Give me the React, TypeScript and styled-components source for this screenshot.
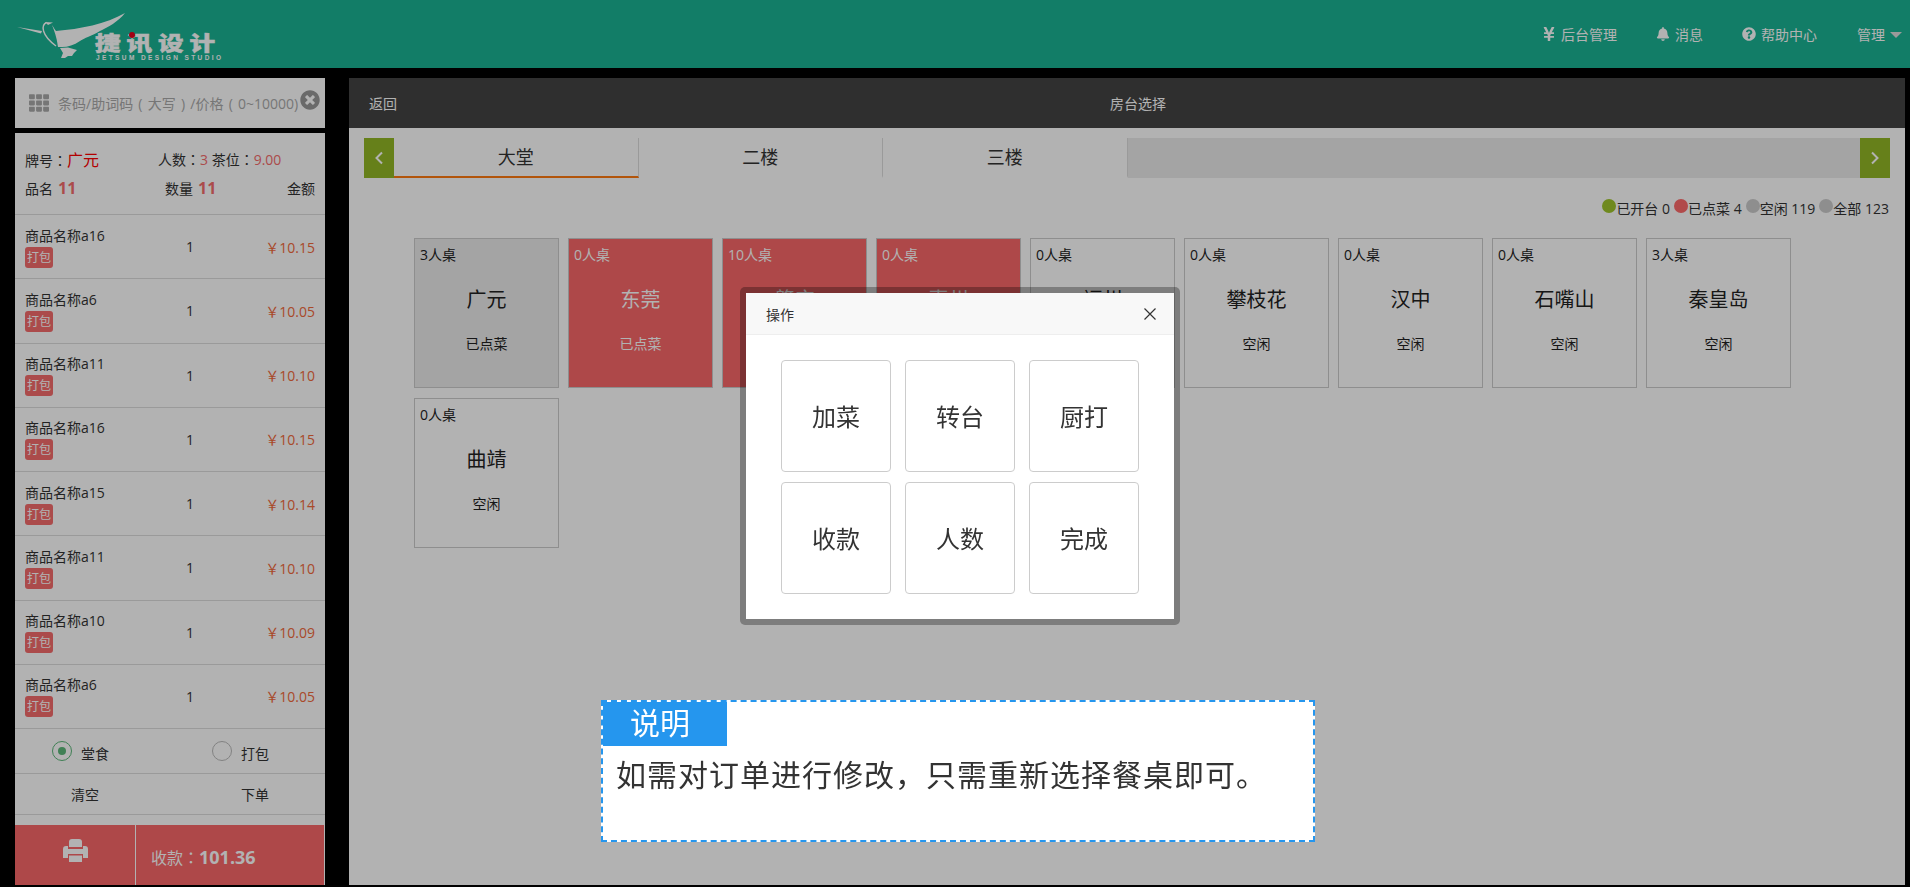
import React from "react";
import styled, { createGlobalStyle } from "styled-components";
import { FaBell, FaQuestionCircle, FaTh, FaTimesCircle, FaYenSign } from "react-icons/fa";

const Global = createGlobalStyle`
  html, body { margin: 0; padding: 0; background: #000; height: 100%; overflow: hidden; }
  body { font-family: "Open Sans", "Noto Sans CJK SC", sans-serif; font-size: 14px; color: #333; }
  * { box-sizing: border-box; }
`;

const Page = styled.div`
  width: 1910px; height: 887px; display: flex; flex-direction: column; background: #000;
`;
const Header = styled.header`
  height: 68px; background: #1ab394; display: flex; align-items: center; justify-content: space-between; flex: none;
`;
const Logo = styled.div`
  position: relative; width: 240px; height: 68px; flex: none;
`;
const LogoBird = styled.svg`
  position: absolute; left: 0; top: 0;
`;
const LogoName = styled.span`
  position: absolute; left: 95px; top: 31px; font-size: 20px; line-height: 23px; font-weight: 900; letter-spacing: 4.6px; color: #fff; white-space: nowrap;
  font-family: "Noto Sans CJK SC", sans-serif; transform: scaleX(1.28); transform-origin: left center; -webkit-text-stroke: .5px #fff;
`;
const LogoSub = styled.span`
  position: absolute; left: 96px; top: 54px; font-size: 6.5px; line-height: 7px; font-weight: 700; letter-spacing: 2.4px; color: #fff; white-space: nowrap;
  font-family: "Liberation Sans", sans-serif;
`;
const Nav = styled.nav`
  display: flex; align-items: center; color: #fff; font-size: 14px; padding-right: 8px;
`;
const NavItem = styled.a<{ $gap: number }>`
  display: flex; align-items: center; gap: 5px; margin-left: ${p => p.$gap}px; white-space: nowrap; color: #fff;
  svg { font-size: 14px; }
`;
const YenIcon = styled.span`
  display: flex; margin-right: -1px; svg { font-size: 16px; }
`;
const Caret = styled.span`
  display: block; width: 0; height: 0; border-left: 6px solid transparent; border-right: 6px solid transparent; border-top: 6px solid #ddd; margin-top: 1px;
`;
const Main = styled.main`
  flex: 1; display: flex; gap: 24px; padding: 10px 5px 2px 15px; min-height: 0;
`;
const LeftCol = styled.aside`
  width: 310px; display: flex; flex-direction: column; gap: 5px; flex: none;
`;
const SearchBox = styled.div`
  height: 50px; background: #fff; display: flex; align-items: center; padding-left: 14px; flex: none; position: relative;
`;
const GridIcon = styled.span`
  display: flex; color: #aaa; font-size: 20px; margin-right: 9px;
`;
const Placeholder = styled.span`
  color: #aaa; font-size: 14px; white-space: nowrap; word-spacing: 1.6px;
`;
const ClearIcon = styled.span`
  position: absolute; left: 285px; top: 12px; display: flex; color: #999; font-size: 20px;
`;
const OrderPanel = styled.section`
  flex: 1; background: #fff; display: flex; flex-direction: column; min-height: 0;
`;
const Summary = styled.div`
  height: 82px; border-bottom: 1px solid #ddd; padding: 16px 10px 0; flex: none;
`;
const SummaryRow = styled.div`
  display: flex; align-items: center; height: 20px; margin-bottom: 9px; position: relative; white-space: nowrap;
`;
const Col = styled.span<{ $w?: number; $right?: boolean }>`
  ${p => (p.$w ? `width: ${p.$w}px;` : "flex: 1;")}
  ${p => (p.$right ? "text-align: right;" : "")}
`;
const Colon = styled.span`
  font-family: "Noto Sans CJK TC", sans-serif;
`;
const Board = styled.span`
  color: #f00; font-size: 16px;
`;
const Num = styled.span`
  color: #f56c6c;
`;
const Count = styled.b`
  color: #f56c6c; font-size: 16px; font-weight: 700; margin-left: 5px;
`;
const ItemRow = styled.div`
  height: 64.25px; border-bottom: 1px solid #ddd; display: flex; align-items: center; padding: 0 10px; flex: none;
`;
const ItemName = styled.div`
  width: 143px; display: flex; flex-direction: column; align-items: flex-start; gap: 1px; line-height: 20px;
`;
const Badge = styled.span`
  width: 28px; height: 21px; line-height: 21px; background: #f56c6c; color: #fff; border-radius: 3px; font-size: 12px; text-align: center; display: block;
`;
const Qty = styled.div`
  width: 44px; text-align: center; font-size: 14px;
`;
const Price = styled.div`
  flex: 1; text-align: right; color: #f26a3c; font-size: 14px; white-space: nowrap;
`;
const RadioRow = styled.div`
  height: 45px; border-bottom: 1px solid #ddd; display: grid; grid-template-columns: 160px 1fr; padding-left: 37px; align-items: center; flex: none;
`;
const RadioItem = styled.label`
  display: flex; align-items: center; gap: 9px;
  span:last-child { margin-top: 3px; }
`;
const RadioCircle = styled.span<{ $on?: boolean }>`
  width: 20px; height: 20px; border-radius: 50%; border: 1px solid ${p => (p.$on ? "#5cb87a" : "#bbb")}; display: flex; align-items: center; justify-content: center; flex: none;
  &::after { content: ""; width: 8px; height: 8px; border-radius: 50%; background: ${p => (p.$on ? "#5cb87a" : "transparent")}; }
`;
const ActionRow = styled.div`
  height: 41px; border-bottom: 1px solid #ddd; display: grid; grid-template-columns: 140px 200px; flex: none;
  align-items: center; justify-items: center;
`;
const PayBar = styled.div`
  margin-top: auto; height: 60px; width: 309px; background: #fa6769; color: #fff; display: flex; flex: none;
`;
const PrintBtn = styled.div`
  width: 121px; border-right: 1px solid #fff; display: flex; align-items: flex-start; justify-content: center; padding-top: 13px;
`;
const PayText = styled.div`
  display: flex; align-items: center; padding-left: 15px; font-size: 16px; padding-top: 3px; white-space: pre;
  b { font-size: 18px; }
`;
const RightPanel = styled.section`
  flex: 1; background: #fff; display: flex; flex-direction: column; min-width: 0;
`;
const RoomBar = styled.div`
  height: 50px; background: #444; color: #fff; display: grid; grid-template-columns: 1fr auto 1fr; align-items: center; padding: 0 20px; flex: none; font-size: 14px;
`;
const RoomTitle = styled.span`
  transform: translateX(11px);
`;
const Tabs = styled.div`
  display: flex; height: 40px; margin: 10px 15px 0; flex: none;
`;
const Arrow = styled.div`
  width: 30px; background: #93b826; display: flex; align-items: center; justify-content: center; flex: none;
`;
const Tab = styled.div<{ $active?: boolean }>`
  width: 244.5px; text-align: center; font-size: 18px; line-height: 38px; color: #333; position: relative; flex: none;
  border-right: 1px solid #ddd;
  border-bottom: 2px solid ${p => (p.$active ? "#ff7a10" : "transparent")};
`;
const TabFill = styled.div`
  flex: 1; background: #ebebeb;
`;
const Legend = styled.div`
  display: flex; justify-content: flex-end; align-items: center; margin: 20px 16px 0 0; height: 20px; font-size: 14px; white-space: nowrap; flex: none;
`;
const LegendItem = styled.span`
  display: flex; align-items: center; margin-left: 4px;
`;
const Dot = styled.i<{ $c: string }>`
  width: 14px; height: 14px; border-radius: 50%; background: ${p => p.$c}; display: block; margin-top: -5px;
`;
const Cards = styled.div`
  display: flex; flex-wrap: wrap; gap: 10px 9px; padding: 20px 90px 0 65px;
`;
const Card = styled.div<{ $kind: "sel" | "red" | "free" }>`
  width: 145px; height: 150px; display: flex; flex-direction: column; align-items: center;
  border: 1px solid #ccc;
  background: ${p => (p.$kind === "sel" ? "#ebebeb" : p.$kind === "red" ? "#fa6769" : "#fff")};
  color: ${p => (p.$kind === "red" ? "#fff" : "#222")};
`;
const Seats = styled.div`
  align-self: flex-start; font-size: 14px; line-height: 20px; margin: 6px 0 0 5px;
`;
const CardName = styled.div`
  font-size: 20px; line-height: 28px; margin-top: 21px;
`;
const CardState = styled.div`
  font-size: 14px; line-height: 20px; margin-top: 20px;
`;
const Overlay = styled.div`
  position: fixed; inset: 0; background: rgba(0,0,0,.3);
`;
const Dialog = styled.div`
  position: fixed; left: 740px; top: 287px; width: 440px; height: 338px; background: #fff; background-clip: padding-box;
  border: 6px solid rgba(0,0,0,.3); border-radius: 5px;
`;
const DialogHead = styled.div`
  height: 42px; background: #f8f8f8; border-bottom: 1px solid #eee; display: flex; align-items: center; justify-content: space-between; padding: 0 18px 0 20px; font-size: 14px; color: #333;
`;
const CloseX = styled.svg`
  display: block;
`;
const DialogGrid = styled.div`
  display: grid; grid-template-columns: repeat(3, 110px); grid-auto-rows: 112px; gap: 10px 14px; padding: 25px 35px;
`;
const Op = styled.button`
  border: 1px solid #ccc; border-radius: 4px; background: #fff; font-size: 24px; color: #333; font-family: "Noto Sans CJK SC", sans-serif; padding: 0 0 2px;
`;
const Note = styled.div`
  position: fixed; left: 601px; top: 700px; width: 714px; height: 142px; background: #fff; border: 2px dashed #2596ee;
`;
const NoteTag = styled.div`
  width: 124px; height: 44px; line-height: 38px; background: #2596ee; color: #fff; font-size: 30px; text-align: center; font-family: "Noto Sans CJK SC", sans-serif;
  padding-right: 10px;
`;
const NoteText = styled.div`
  font-size: 30px; line-height: 42px; color: #333; padding: 6px 0 0 13px; white-space: nowrap; font-family: "Noto Sans CJK SC", sans-serif; letter-spacing: 1px;
`;

const items: [string, string][] = [
  ["商品名称a16", "10.15"], ["商品名称a6", "10.05"], ["商品名称a11", "10.10"], ["商品名称a16", "10.15"],
  ["商品名称a15", "10.14"], ["商品名称a11", "10.10"], ["商品名称a10", "10.09"], ["商品名称a6", "10.05"],
];
const cards: [string, string, string, "sel" | "red" | "free"][] = [
  ["3人桌", "广元", "已点菜", "sel"], ["0人桌", "东莞", "已点菜", "red"], ["10人桌", "肇庆", "已点菜", "red"], ["0人桌", "惠州", "已点菜", "red"],
  ["0人桌", "福州", "空闲", "free"], ["0人桌", "攀枝花", "空闲", "free"], ["0人桌", "汉中", "空闲", "free"], ["0人桌", "石嘴山", "空闲", "free"],
  ["3人桌", "秦皇岛", "空闲", "free"], ["0人桌", "曲靖", "空闲", "free"],
];
const ops = ["加菜", "转台", "厨打", "收款", "人数", "完成"];

const Chevron = ({ dir }: { dir: "l" | "r" }) => (
  <svg width="10" height="14" viewBox="0 0 10 14">
    <path d={dir === "l" ? "M8 1.5 L2.5 7 L8 12.5" : "M2 1.5 L7.5 7 L2 12.5"} stroke="#fff" strokeWidth="2" fill="none" />
  </svg>
);
const Printer = () => (
  <svg width="25" height="25" viewBox="0 0 25 25">
    <path d="M6 4 a3 3 0 0 1 3-3 h7 a3 3 0 0 1 3 3 v5 H6 Z" fill="#fff" />
    <path d="M3 8 h2 v3 h15 v-3 h2 a3 3 0 0 1 3 3 v9 h-5 v-4 H5 v4 H0 v-9 a3 3 0 0 1 3-3 Z" fill="#fff" />
    <path d="M6 17.5 h13 V24 H6 Z" fill="#fff" />
  </svg>
);

export default function App() {
  return (
    <Page>
      <Global />
      <Header>
        <Logo>
          <LogoBird width="130" height="68" viewBox="0 0 130 68">
            <path d="M17 27 L42 31 L41 33.5 Z" fill="#fff" />
            <path d="M46.5 22.5 C41 25 41 35 56 46" stroke="#fff" strokeWidth="1.4" fill="none" />
            <path d="M45 22 L53 22.5 L48 25 Z" fill="#fff" />
            <path d="M52 25 C54 28 55 30 56 31 C80 29 106 24 125 13 C118 22 108 27 100 31 C92 36 84 38 80 41 C74 45 68 47 62 47 L58 47 C57 40 56 35 52 25 Z" fill="#fff" />
            <path d="M60 48 L68 47.5 L77 50 L74 53 L72 56 L68 56 L65 58 L61 58 L63 53 Z" fill="#fff" />
          </LogoBird>
          <LogoName>捷讯设计</LogoName>
          <LogoSub>JETSUM DESIGN STUDIO</LogoSub>
          <LogoBird width="240" height="68" viewBox="0 0 240 68"><circle cx="132" cy="35" r="3" fill="#e8001c" /></LogoBird>
        </Logo>
        <Nav>
          <NavItem $gap={0}><YenIcon><FaYenSign /></YenIcon>后台管理</NavItem>
          <NavItem $gap={39}><FaBell />消息</NavItem>
          <NavItem $gap={39}><FaQuestionCircle />帮助中心</NavItem>
          <NavItem $gap={40}>管理<Caret /></NavItem>
        </Nav>
      </Header>
      <Main>
        <LeftCol>
          <SearchBox>
            <GridIcon><FaTh /></GridIcon>
            <Placeholder>条码/助词码 ( 大写 ) /价格 ( 0~10000)</Placeholder>
            <ClearIcon><FaTimesCircle /></ClearIcon>
          </SearchBox>
          <OrderPanel>
            <Summary>
              <SummaryRow>
                <Col $w={133}>牌号<Colon>：</Colon><Board>广元</Board></Col>
                <Col>人数<Colon>：</Colon><Num>3</Num> 茶位<Colon>：</Colon><Num>9.00</Num></Col>
              </SummaryRow>
              <SummaryRow>
                <Col $w={140}>品名<Count>11</Count></Col>
                <Col>数量<Count>11</Count></Col>
                <Col $right>金额</Col>
              </SummaryRow>
            </Summary>
            {items.map(([n, p], i) => (
              <ItemRow key={i}>
                <ItemName>{n}<Badge>打包</Badge></ItemName>
                <Qty>1</Qty>
                <Price>￥{p}</Price>
              </ItemRow>
            ))}
            <RadioRow>
              <RadioItem><RadioCircle $on /><span>堂食</span></RadioItem>
              <RadioItem><RadioCircle /><span>打包</span></RadioItem>
            </RadioRow>
            <ActionRow><span>清空</span><span>下单</span></ActionRow>
            <PayBar>
              <PrintBtn><Printer /></PrintBtn>
              <PayText>收款<Colon>：</Colon><b>101.36</b></PayText>
            </PayBar>
          </OrderPanel>
        </LeftCol>
        <RightPanel>
          <RoomBar><span>返回</span><RoomTitle>房台选择</RoomTitle><span /></RoomBar>
          <Tabs>
            <Arrow><Chevron dir="l" /></Arrow>
            <Tab $active>大堂</Tab>
            <Tab>二楼</Tab>
            <Tab>三楼</Tab>
            <TabFill />
            <Arrow><Chevron dir="r" /></Arrow>
          </Tabs>
          <Legend>
            <LegendItem><Dot $c="#9fc52c" />已开台 0</LegendItem>
            <LegendItem><Dot $c="#fe6a6b" />已点菜 4</LegendItem>
            <LegendItem><Dot $c="#ccc" />空闲 119</LegendItem>
            <LegendItem><Dot $c="#ccc" />全部 123</LegendItem>
          </Legend>
          <Cards>
            {cards.map(([s, n, st, k], i) => (
              <Card key={i} $kind={k}>
                <Seats>{s}</Seats>
                <CardName>{n}</CardName>
                <CardState>{st}</CardState>
              </Card>
            ))}
          </Cards>
        </RightPanel>
      </Main>
      <Overlay />
      <Dialog>
        <DialogHead>操作
          <CloseX width="12" height="12" viewBox="0 0 12 12"><path d="M.5.5l11 11M11.5.5l-11 11" stroke="#333" strokeWidth="1.2" fill="none" /></CloseX>
        </DialogHead>
        <DialogGrid>{ops.map(o => <Op key={o}>{o}</Op>)}</DialogGrid>
      </Dialog>
      <Note>
        <NoteTag>说明</NoteTag>
        <NoteText>如需对订单进行修改，只需重新选择餐桌即可。</NoteText>
      </Note>
    </Page>
  );
}
